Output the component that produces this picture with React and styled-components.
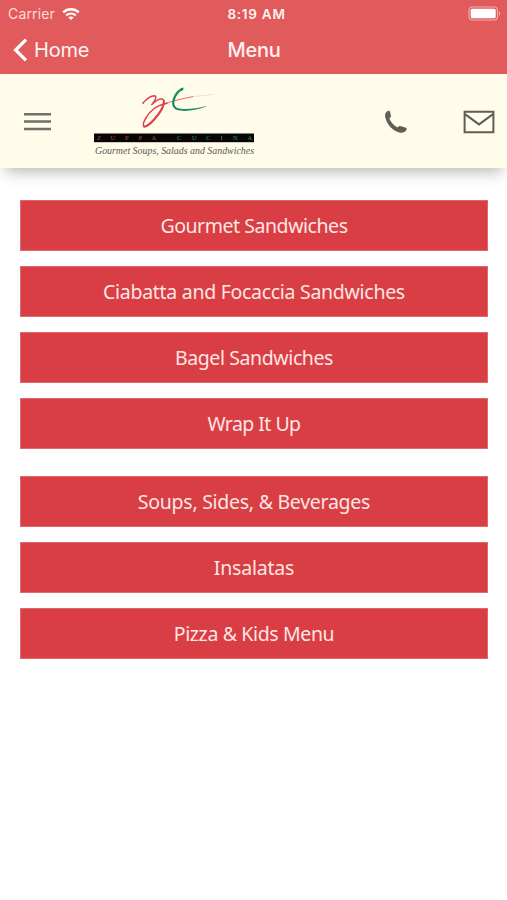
import React from 'react';
import styled, { createGlobalStyle } from 'styled-components';

const GlobalStyle = createGlobalStyle`
    * {
        box-sizing: border-box;
    }
    body {
        margin: 0;
        background: #FFFFFF;
        overflow: hidden;
    }
`;

const Container = styled('div')`
    width: 100%;
    height: 900px;
    display: flex;
    flex-direction: column;
    background: #FFFFFF;
    font-family: Inter, "Liberation Sans", sans-serif;
`;

const TopBar = styled('div')`
    height: 74px;
    flex-shrink: 0;
    background: #E15A5C;
    color: #FFF3F1;
`;

const StatusBar = styled('div')`
    display: grid;
    grid-template-columns: 1fr auto 1fr;
    align-items: center;
    height: 28px;
    padding: 0 6px 0 8px;
    font-size: 14px;
    line-height: 28px;
    .carrier {
        display: flex;
        align-items: center;
        gap: 7px;
        color: #FFDDDB;
        letter-spacing: 0.15px;
    }
    .time {
        padding-left: 4px;
        font-size: 13.5px;
        font-weight: 600;
        letter-spacing: 0.75px;
    }
    .battery {
        display: flex;
        justify-content: flex-end;
        padding-bottom: 2px;
    }
`;

const NavBar = styled('div')`
    display: grid;
    grid-template-columns: 1fr auto 1fr;
    align-items: center;
    height: 44px;
    padding: 0 12px 0 13px;
    font-size: 20px;
    line-height: 44px;
    .back {
        display: flex;
        align-items: center;
        gap: 6px;
        letter-spacing: -0.2px;
    }
    .title {
        font-weight: 550;
        letter-spacing: -0.3px;
    }
`;

const Header = styled('div')`
    display: flex;
    flex-direction: row;
    align-items: center;
    height: 94px;
    flex-shrink: 0;
    padding: 0 12px 0 24px;
    background: #FFFCE9;
    box-shadow: 0 9px 14px -5px rgba(0, 0, 0, 0.28);
    .logo {
        margin-left: 41px;
    }
    .phone {
        margin: 2px 0 0 auto;
    }
    .mail {
        margin: 1px 0 0 55px;
    }
    svg {
        display: block;
    }
`;

const MenuList = styled('div')`
    display: flex;
    flex-direction: column;
    gap: 27px;
    padding: 32px 19px 0 20px;
`;

const MenuGroup = styled('div')`
    display: flex;
    flex-direction: column;
    gap: 15px;
`;

const MenuButton = styled('button')`
    height: 51px;
    padding: 1px 0 0;
    border: 1px solid #E2686B;
    border-radius: 0;
    background: #D93E44;
    color: #FFE6E3;
    font-family: "Noto Sans", "Open Sans", sans-serif;
    font-size: 19.5px;
    line-height: 28px;
    letter-spacing: ${props => props.$spacing}px;
    text-align: center;
    white-space: nowrap;
`;

const groups = [
    [
        {label: 'Gourmet Sandwiches', spacing: -0.45},
        {label: 'Ciabatta and Focaccia Sandwiches', spacing: -0.29},
        {label: 'Bagel Sandwiches', spacing: -0.4},
        {label: 'Wrap It Up', spacing: -0.55},
    ],
    [
        {label: 'Soups, Sides, & Beverages', spacing: -0.27},
        {label: 'Insalatas', spacing: -0.22},
        {label: 'Pizza & Kids Menu', spacing: -0.37},
    ],
];

const WifiIcon = () => (
    <svg width="18" height="13" viewBox="0 0 18 13" fill="none" stroke="#FFFFFF">
        <path d="M1.2 4.4C5.6 0.2 12.4 0.2 16.8 4.4" strokeWidth="2.3"/>
        <path d="M4.1 7.4C6.9 4.8 11.1 4.8 13.9 7.4" strokeWidth="2.1"/>
        <path d="M9 12.1L6.3 9.4C7.9 8.1 10.1 8.1 11.7 9.4Z" fill="#FFFFFF" stroke="none"/>
    </svg>
)

const BatteryIcon = () => (
    <svg width="33" height="15" viewBox="0 0 33 15">
        <rect x="1" y="1" width="28.5" height="13" rx="3.4" fill="none" stroke="#F5AFAE" strokeWidth="1.1"/>
        <rect x="2.7" y="2.7" width="25" height="9.6" rx="1.6" fill="#FFFFFF"/>
        <path d="M31 5.3C32.6 6 32.6 9 31 9.7Z" fill="#F5AFAE"/>
    </svg>
)

const BackIcon = () => (
    <svg width="15" height="24" viewBox="0 0 15 24">
        <path d="M13 1.6L2.6 12L13 22.4" fill="none" stroke="#FFFFFF" strokeWidth="3.3"/>
    </svg>
)

const BurgerIcon = () => (
    <svg width="27" height="19" viewBox="0 0 27 19" stroke="#716F66" strokeWidth="2.5">
        <path d="M0 2.2H27M0 9.6H27M0 17H27"/>
    </svg>
)

const PhoneIcon = () => (
    <svg className="phone" width="24" height="24" viewBox="0 0 24 24" fill="#605E57">
        <path d="M3.3 1.2C4.7 0.4 5.7 0.8 6.1 2.1L6.9 5.4C7.2 6.7 6.7 7.3 5.3 8.4C6.9 12.3 9.9 15.5 13.8 17.5C14.9 16.2 15.7 15.8 17 16.2L21.3 17.5C22.8 18 23.1 18.9 22.4 20C20.8 22.5 18.2 23.3 15.2 22.4C8.2 20.3 2.6 14 1.2 6.9C0.8 4.3 1.5 2.2 3.3 1.2Z"/>
    </svg>
)

const MailIcon = () => (
    <svg className="mail" width="32" height="24" viewBox="0 0 32 24" fill="none" stroke="#605E57" strokeWidth="2">
        <path d="M1.6 1.8H30.4V22.3H1.6Z"/>
        <path d="M2 4.1L16 14.4L30 4.1"/>
    </svg>
)

const Logo = () => (
    <svg className="logo" width="164" height="74" viewBox="92 84 164 74">
        <g fill="none" stroke="#DC4150" strokeLinecap="round" strokeLinejoin="round">
            <path d="M142.8 103.2C146 99.5 151 96 154.5 95.8C157.5 96 155 101 151.8 104.5C156 100.5 160 98 162.7 99.2C166.5 101 162 110 155 118.5C150.5 124 146.5 127.5 144 126.6C141.5 124.5 147 114 153.5 109C158 105.5 162 104.3 167 103.2" strokeWidth="1.5"/>
            <path d="M163.8 101.5C164 106 160 113 155 118.5C151 123 147 126.5 144.3 126.6" strokeWidth="2"/>
            <path d="M166 103.5C172 101 183 98.5 193 96.6" strokeWidth="0.8"/>
        </g>
        <path d="M183 87.5C184.5 88.7 182.5 91.6 180.3 91.2C175.5 96 171.8 104 176.5 107.5C180.5 110 194 109.3 207 105.8C198 110.6 183 112.2 176.5 109.8C167.5 106 174 90 183 87.5Z" fill="#159064"/>
        <path d="M193 96.6L213 94.5" fill="none" stroke="#F1D2CA" strokeWidth="0.8"/>
        <rect x="94" y="133.5" width="160" height="8.7" fill="#090507"/>
        <g fontFamily="Liberation Serif, serif" fontSize="6.5">
            <text x="97 110.5 125 138.5 151.5" y="140" fill="#BD405A">ZUPPA</text>
            <text x="177 192 206 220.5 233 247.5" y="140" fill="#1B9B7C">CUCINA</text>
        </g>
        <text x="95" y="153.5" fill="#5B5954" fontFamily="Liberation Serif, serif" fontStyle="italic" fontSize="9.5" textLength="159" lengthAdjust="spacingAndGlyphs">Gourmet Soups, Salads and Sandwiches</text>
    </svg>
)

const App = () => {
    return(
        <Container>
            <GlobalStyle/>
            <TopBar>
                <StatusBar>
                    <span className="carrier">
                        Carrier
                        <WifiIcon/>
                    </span>
                    <span className="time">8:19 AM</span>
                    <span className="battery">
                        <BatteryIcon/>
                    </span>
                </StatusBar>
                <NavBar>
                    <span className="back">
                        <BackIcon/>
                        Home
                    </span>
                    <span className="title">Menu</span>
                </NavBar>
            </TopBar>
            <Header>
                <BurgerIcon/>
                <Logo/>
                <PhoneIcon/>
                <MailIcon/>
            </Header>
            <MenuList>
                {
                    groups.map((items, index) => (
                        <MenuGroup key={index}>
                            {
                                items.map(item => (
                                    <MenuButton $spacing={item.spacing} key={item.label}>
                                        {item.label}
                                    </MenuButton>
                                ))
                            }
                        </MenuGroup>
                    ))
                }
            </MenuList>
        </Container>
    );
}

export default App;
